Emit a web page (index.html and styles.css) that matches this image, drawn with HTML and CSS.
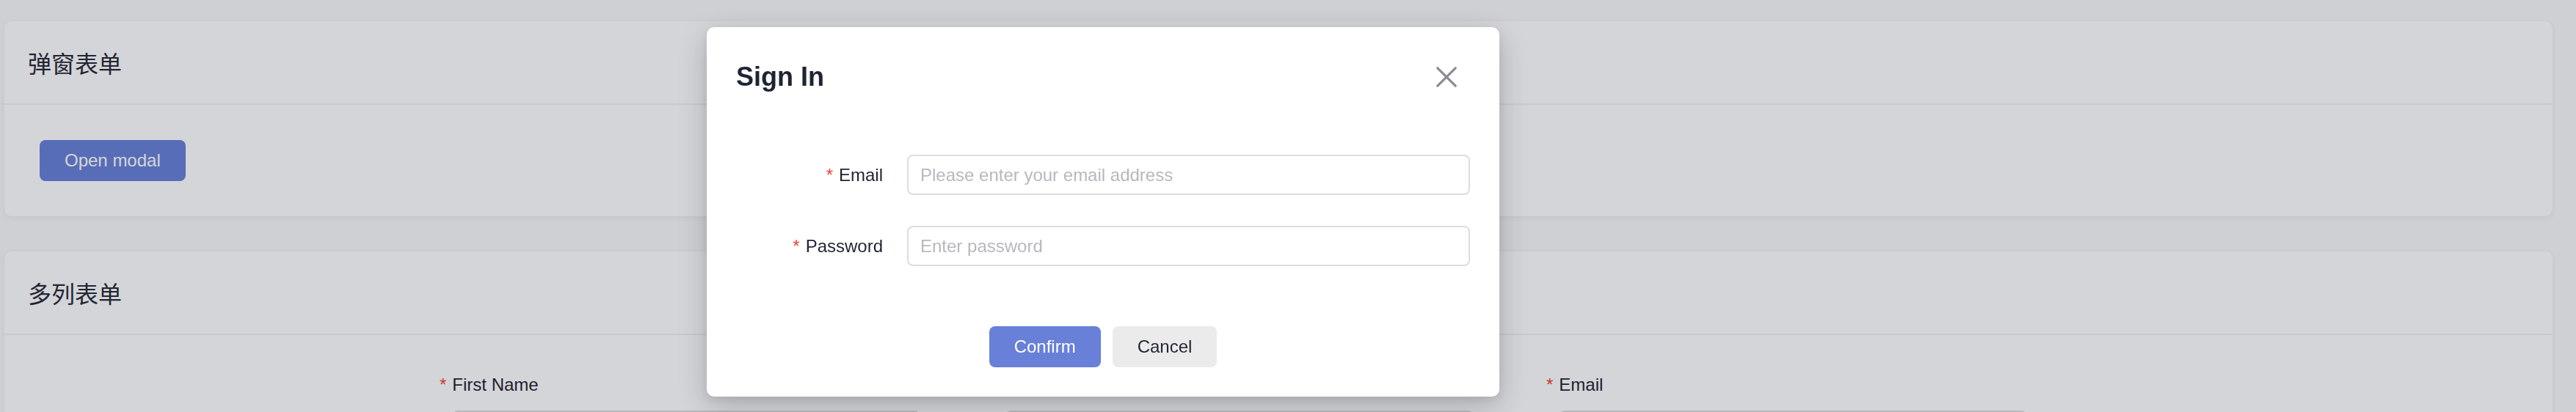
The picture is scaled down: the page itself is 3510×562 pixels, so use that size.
FILE: index.html
```html
<!DOCTYPE html>
<html lang="zh-CN">
<head>
<meta charset="utf-8">
<title>Forms</title>
<link rel="stylesheet" href="styles.css">
</head>
<body>
<main class="page">
  <section class="card">
    <header class="card-header"><h2 class="card-title">弹窗表单</h2></header>
    <div class="card-body">
      <button class="btn btn-primary" type="button">Open modal</button>
    </div>
  </section>
  <section class="card">
    <header class="card-header"><h2 class="card-title">多列表单</h2></header>
    <div class="card-body">
      <form class="grid-form">
        <div class="field">
          <label class="field-label"><span class="req req-hang">*</span>First Name</label>
          <input class="input" type="text">
        </div>
        <div class="field">
          <label class="field-label"><span class="req req-hang">*</span>Last Name</label>
          <input class="input" type="text">
        </div>
        <div class="field">
          <label class="field-label"><span class="req req-hang">*</span>Email</label>
          <input class="input" type="text">
        </div>
      </form>
    </div>
  </section>
</main>

<div class="overlay">
  <div class="modal" role="dialog" aria-label="Sign In">
    <div class="modal-header">
      <h3 class="modal-title">Sign In</h3>
      <button class="close-btn" type="button" aria-label="Close">
        <svg width="28" height="28" viewBox="0 0 28 28" aria-hidden="true">
          <path d="M1.8 1.8 L26.2 26.2 M26.2 1.8 L1.8 26.2" stroke="#8a8c95" stroke-width="3.2" stroke-linecap="round" fill="none"/>
        </svg>
      </button>
    </div>
    <div class="modal-body">
      <div class="form-row">
        <label class="row-label"><span class="req">*</span>Email</label>
        <input class="input" type="email" placeholder="Please enter your email address">
      </div>
      <div class="form-row">
        <label class="row-label"><span class="req">*</span>Password</label>
        <input class="input" type="password" placeholder="Enter password">
      </div>
    </div>
    <div class="modal-footer">
      <button class="btn btn-primary btn-confirm" type="button">Confirm</button>
      <button class="btn btn-default" type="button">Cancel</button>
    </div>
  </div>
</div>
</body>
</html>
```

FILE: styles.css
```css
html, body {
  margin: 0;
  padding: 0;
  height: 100%;
  overflow: hidden;
}

body {
  background: #f9f9fa;
  font-family: "Liberation Sans", Arial, "Noto Sans CJK SC", sans-serif;
  color: #1f2433;
}

.page {
  display: flex;
  flex-direction: column;
  gap: 48px;
  padding: 29px 32px 0 6px;
}

.card {
  background: #ffffff;
  border-radius: 10px;
  box-shadow: 0 2px 8px rgba(0, 0, 0, 0.06);
}

.card-header {
  height: 112px;
  padding: 0 32px;
  display: flex;
  align-items: center;
  border-bottom: 2px solid #f0f1f4;
}

.card-title {
  margin: 0;
  font-family: "Noto Sans CJK SC", "Liberation Sans", sans-serif;
  font-size: 32px;
  font-weight: 400;
  color: #262a36;
}

.card-body {
  padding: 48px;
}

.btn {
  display: inline-flex;
  align-items: center;
  justify-content: center;
  height: 56px;
  padding: 0 32px;
  border: 2px solid transparent;
  border-radius: 8px;
  font-family: "Liberation Sans", Arial, sans-serif;
  font-size: 24px;
  cursor: pointer;
}

.btn-primary {
  background: #6880d8;
  color: #ffffff;
}

.btn-default {
  background: #ebebec;
  color: #1f2433;
}

.grid-form {
  display: grid;
  grid-template-columns: repeat(3, 638px);
  column-gap: 116px;
  padding-left: 562px;
  padding-bottom: 200px;
}

.field {
  display: flex;
  flex-direction: column;
}

.field-label {
  font-size: 24px;
  line-height: 40px;
  margin-bottom: 15px;
  color: #1f2433;
}

.req {
  color: #f04134;
  margin-right: 8px;
}

.req-hang {
  margin-left: -17px;
}

.input {
  box-sizing: border-box;
  height: 55px;
  width: 100%;
  padding: 0 16px;
  border: 2px solid #dcdde1;
  border-radius: 8px;
  background: #ffffff;
  font-family: "Liberation Sans", Arial, sans-serif;
  font-size: 24px;
  color: #1f2433;
  outline: none;
}

.input::placeholder {
  color: #b6b8be;
}

.overlay {
  position: fixed;
  inset: 0;
  background: rgba(17, 24, 39, 0.18);
  padding: 37px 0 0 963px;
}

.modal {
  width: 1080px;
  background: #ffffff;
  border-radius: 10px;
  box-shadow: 0 12px 40px rgba(0, 0, 0, 0.2), 0 4px 12px rgba(0, 0, 0, 0.06);
}

.modal-header {
  display: flex;
  align-items: center;
  justify-content: space-between;
  padding: 40px 58px 40px 40px;
}

.modal-title {
  margin: 0;
  font-size: 36px;
  line-height: 56px;
  font-weight: 700;
  color: #1f2433;
}

.close-btn {
  display: flex;
  padding: 0;
  border: none;
  background: none;
  cursor: pointer;
}

.modal-body {
  padding: 38px 40px 0;
}

.form-row {
  display: grid;
  grid-template-columns: 200px 1fr;
  column-gap: 33px;
  align-items: center;
  margin-bottom: 42px;
}

.row-label {
  text-align: right;
  font-size: 24px;
  line-height: 55px;
  color: #1f2433;
}

.modal-footer {
  display: flex;
  justify-content: center;
  gap: 16px;
  padding: 40px 40px 40px;
}
```
